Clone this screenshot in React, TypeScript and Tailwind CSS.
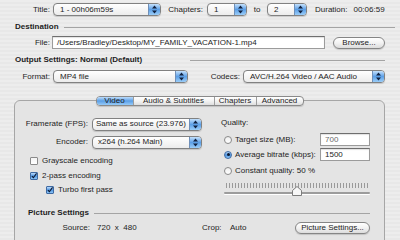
import React from "react";

function Arrows() {
  return (
    <svg width="5" height="9" viewBox="0 0 5 9">
      <path d="M2.5 0.5L5 3.5H0z M2.5 8.5L0 5.5h5z" fill="#10213f" />
    </svg>
  );
}

function Popup({ className, text, pad = "pl-[6px]" }: { className: string; text: string; pad?: string }) {
  return (
    <div
      className={`flex h-[13px] items-stretch rounded-[4px] border border-[#818181] bg-gradient-to-b from-white to-[#ececec] shadow-[0_1px_1px_rgba(0,0,0,0.15)] ${className}`}
    >
      <span className={`flex flex-1 items-center whitespace-nowrap ${pad}`}>{text}</span>
      <span className="flex w-[12px] shrink-0 items-center justify-center rounded-r-[3px] border-l border-[#6f8fb8] bg-gradient-to-b from-[#c4e1fc] via-[#5c9fe6] to-[#9acdf8]">
        <Arrows />
      </span>
    </div>
  );
}

function Field({ className, text, dim }: { className: string; text?: string; dim?: boolean }) {
  return (
    <div
      className={`flex h-[13px] items-center border border-[#9b9b9b] border-t-[#6e6e6e] bg-white pl-[4px] shadow-[inset_0_1px_1px_rgba(0,0,0,0.12)] ${dim ? "text-[#6a6a6a]" : ""} ${className}`}
    >
      {text}
    </div>
  );
}

function Pill({ className, text }: { className: string; text: string }) {
  return (
    <div
      className={`flex h-[12px] items-center justify-center rounded-full border border-[#858585] bg-gradient-to-b from-white via-[#f2f2f2] to-[#dcdcdc] shadow-[0_1px_1px_rgba(0,0,0,0.15)] ${className}`}
    >
      {text}
    </div>
  );
}

function Check({ on }: { on?: boolean }) {
  if (!on)
    return <span className="h-[8px] w-[8px] rounded-[1px] border border-[#8a8a8a] bg-gradient-to-b from-[#f4f4f4] to-white" />;
  return (
    <span className="flex h-[8px] w-[8px] items-center justify-center rounded-[1px] border border-[#3f6aa3] bg-gradient-to-b from-[#bcdcfb] via-[#4f95e0] to-[#8cc4f6]">
      <svg width="8" height="8" viewBox="0 0 8 8" className="-mt-[1px]">
        <path d="M1.2 4.2L3.2 6.3L7.4 0.6" stroke="#0c1830" strokeWidth="1.5" fill="none" />
      </svg>
    </span>
  );
}

function Radio({ on }: { on?: boolean }) {
  if (!on)
    return <span className="h-[8px] w-[8px] rounded-full border border-[#8a8a8a] bg-gradient-to-b from-[#efefef] to-white" />;
  return (
    <span className="flex h-[8px] w-[8px] items-center justify-center rounded-full border border-[#3f6aa3] bg-gradient-to-b from-[#bcdcfb] via-[#4f95e0] to-[#8cc4f6]">
      <span className="h-[3px] w-[3px] rounded-full bg-[#0c1830]" />
    </span>
  );
}

function Rule({ className }: { className: string }) {
  return <div className={`h-px bg-[#a4a4a4] ${className}`} />;
}

export default function App() {
  return (
    <div className="flex h-[240px] w-[400px] flex-col overflow-hidden bg-[repeating-linear-gradient(180deg,#ededed_0px,#ededed_2px,#e8e8e8_2px,#e8e8e8_4px)] font-['Liberation_Sans',Arial,sans-serif] text-[8px] leading-none text-[#1d1d1d]">
      {/* title / chapters / duration */}
      <div className="mt-[3px] flex h-[13px] items-center">
        <span className="w-[50px] text-right">Title:</span>
        <Popup className="ml-[3px] w-[108px]" text="1 - 00h06m59s" />
        <span className="w-[46px] pr-[4px] text-right">Chapters:</span>
        <Popup className="w-[40px]" text="1" />
        <span className="w-[20px] text-center">to</span>
        <Popup className="w-[40px]" text="2" />
        <span className="ml-[8px]">Duration:</span>
        <span className="ml-[6px]">00:06:59</span>
      </div>

      <div className="mt-[7px] flex h-[12px] items-center pl-[15px]">
        <span className="font-bold">Destination</span>
        <Rule className="ml-[5px] mr-[5px] flex-1" />
      </div>

      <div className="mt-[5px] flex h-[13px] items-center">
        <span className="w-[50px] text-right">File:</span>
        <Field className="ml-[2px] w-[273px]" text="/Users/Bradley/Desktop/MY_FAMILY_VACATION-1.mp4" />
        <Pill className="ml-[8px] w-[52px]" text="Browse..." />
      </div>

      <div className="mt-[7px] flex h-[12px] items-center pl-[15px]">
        <span className="w-[175px] font-bold">Output Settings: Normal (Default)</span>
        <Rule className="mr-[15px] flex-1" />
      </div>

      <div className="mt-[6px] flex h-[13px] items-center">
        <span className="w-[50px] text-right">Format:</span>
        <Popup className="ml-[3px] w-[135px]" text="MP4 file" />
        <span className="w-[55px] pr-[3px] text-right">Codecs:</span>
        <Popup className="w-[142px]" text="AVC/H.264 Video / AAC Audio" />
      </div>

      {/* tab strip + tab box */}
      <div className="relative z-10 ml-[14px] mt-[13px] -mb-[6px] flex h-[12px] w-[371px] justify-center">
        <div className="flex overflow-hidden rounded-[4px] border border-[#8a8a8a] bg-gradient-to-b from-white via-[#f3f3f3] to-[#dedede] shadow-[0_1px_1px_rgba(0,0,0,0.15)]">
          <div className="flex w-[36px] items-center justify-center bg-gradient-to-b from-[#bcdcfb] via-[#5b9fe6] to-[#97cbf8]">Video</div>
          <div className="flex w-[81px] items-center justify-center border-l border-[#9d9d9d]">Audio &amp; Subtitles</div>
          <div className="flex w-[42px] items-center justify-center border-l border-[#9d9d9d]">Chapters</div>
          <div className="flex w-[47px] items-center justify-center border-l border-[#9d9d9d]">Advanced</div>
        </div>
      </div>
      <div className="ml-[14px] flex h-[150px] w-[371px] shrink-0 flex-col rounded-[6px] border border-[#a6a6a6] bg-[#e4e4e4]">
        <div className="flex">
          <div className="flex w-[205px] flex-col">
            <div className="mt-[17px] flex h-[12px] items-center">
              <span className="w-[73px] text-right">Framerate (FPS):</span>
              <Popup className="ml-[4px] h-[12px] w-[110px]" pad="pl-[3px]" text="Same as source (23.976)" />
            </div>
            <div className="mt-[6px] flex h-[12px] items-center">
              <span className="w-[73px] text-right">Encoder:</span>
              <Popup className="ml-[4px] h-[12px] w-[110px]" pad="pl-[5px]" text="x264 (h.264 Main)" />
            </div>
            <div className="mt-[8px] flex h-[10px] items-center gap-[4px] pl-[15px]">
              <Check />
              <span>Grayscale encoding</span>
            </div>
            <div className="mt-[5px] flex h-[10px] items-center gap-[4px] pl-[15px]">
              <Check on />
              <span>2-pass encoding</span>
            </div>
            <div className="mt-[4px] flex h-[10px] items-center gap-[4px] pl-[31px]">
              <Check on />
              <span>Turbo first pass</span>
            </div>
          </div>

          <div className="flex flex-1 flex-col">
            <div className="mt-[17px] flex h-[10px] items-center pl-[1px]">Quality:</div>
            <div className="mt-[5px] flex h-[13px] items-center">
              <div className="flex w-[100px] items-center gap-[3px] pl-[4px]">
                <Radio />
                <span>Target size (MB):</span>
              </div>
              <Field className="w-[50px]" text="700" dim />
            </div>
            <div className="mt-[2px] flex h-[13px] items-center">
              <div className="flex w-[100px] items-center gap-[3px] pl-[4px]">
                <Radio on />
                <span>Average bitrate (kbps):</span>
              </div>
              <Field className="w-[50px]" text="1500" />
            </div>
            <div className="mt-[5px] flex h-[10px] items-center gap-[3px] pl-[4px]">
              <Radio />
              <span>Constant quality: 50 %</span>
            </div>
            <div className="relative ml-[4px] mt-[6px] flex h-[14px] w-[146px] flex-col">
              <div className="mx-[2px] mt-[1px] h-[5px] bg-[repeating-linear-gradient(90deg,#9a9a9a_0px,#9a9a9a_1px,transparent_1px,transparent_3px)]" />
              <div className="mt-[4px] h-[2px] rounded-full bg-[#9c9c9c] shadow-[0_1px_0_#fff]" />
              <svg className="absolute left-[68px] top-[4px]" width="10" height="10" viewBox="0 0 10 10">
                <path d="M5 0.5L9.5 4.5V9.5H0.5V4.5Z" fill="#f7f7f7" stroke="#7c7c7c" />
              </svg>
            </div>
          </div>
        </div>

        <div className="mt-[12px] flex h-[10px] items-center pl-[13px]">
          <span className="font-bold">Picture Settings</span>
          <Rule className="ml-[5px] mr-[14px] flex-1" />
        </div>

        <div className="mt-[4px] flex h-[12px] items-center">
          <span className="w-[75px] text-right">Source:</span>
          <span className="ml-[7px] w-[105px]">720&nbsp; x&nbsp; 480</span>
          <span className="w-[28px]">Crop:</span>
          <span className="w-[65px]">Auto</span>
          <Pill className="w-[75px]" text="Picture Settings..." />
        </div>
      </div>
    </div>
  );
}
